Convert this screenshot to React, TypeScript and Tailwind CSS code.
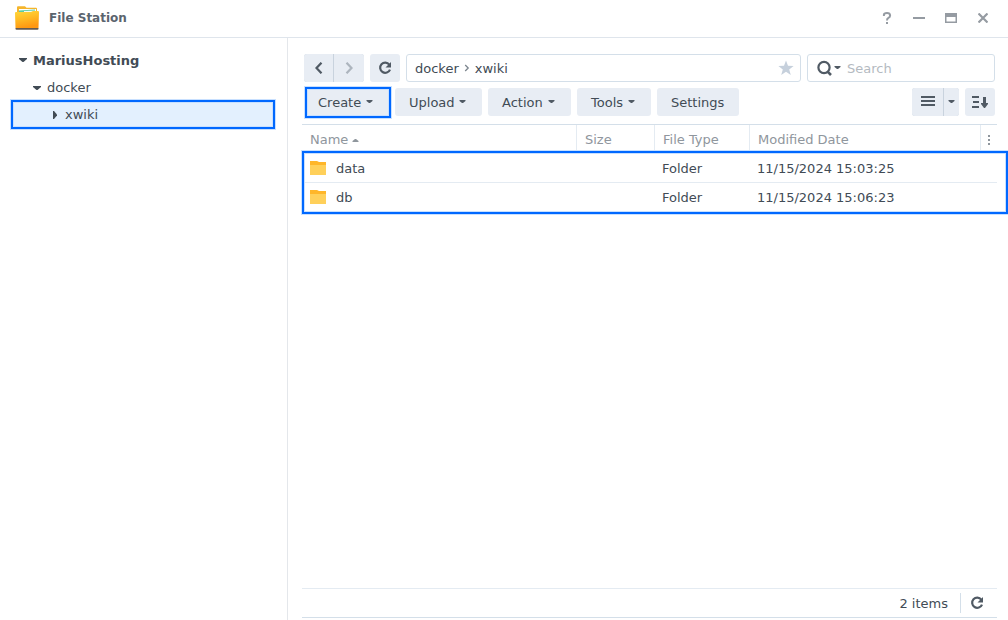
import { useState, type ReactNode } from "react";
import clsx from "clsx";

type FileRow = { name: string; size: string; type: string; modified: string };

const files: FileRow[] = [
  { name: "data", size: "", type: "Folder", modified: "11/15/2024 15:03:25" },
  { name: "db", size: "", type: "Folder", modified: "11/15/2024 15:06:23" },
];

const menus = [
  { label: "Create", width: "w-[85px]", hasMenu: true, marked: true },
  { label: "Upload", width: "w-[87px]", hasMenu: true },
  { label: "Action", width: "w-[83px]", hasMenu: true },
  { label: "Tools", width: "w-[74px]", hasMenu: true },
  { label: "Settings", width: "w-[82px]", hasMenu: false },
];

function Caret({ className }: { className?: string }) {
  return (
    <svg className={clsx("shrink-0", className)} width="7" height="4" viewBox="0 0 7 4" fill="currentColor">
      <path d="M.500 0h6v1L4 3H3L.500 1z" />
    </svg>
  );
}

function TreeArrow({ open }: { open: boolean }) {
  return open ? (
    <svg className="shrink-0" width="10" height="8" viewBox="0 0 10 8" fill="currentColor">
      <path d="M1 2h8v1L5.500 6h-1L1 3z" />
    </svg>
  ) : (
    <svg className="shrink-0" width="10" height="8" viewBox="0 0 10 8" fill="currentColor">
      <path d="M3 0h1l3 3.500v1L4 8H3z" />
    </svg>
  );
}

function ReloadIcon() {
  return (
    <svg width="14" height="14" viewBox="0 0 14 14" fill="none">
      <path d="M11.300 3.600A5.100 5.100 0 1 0 12 8.600" stroke="currentColor" strokeWidth="2.200" />
      <path d="M13 1v5.500H7.500z" fill="currentColor" />
    </svg>
  );
}

function FolderIcon() {
  return (
    <svg className="shrink-0" width="16" height="14" viewBox="0 0 16 14">
      <path d="M0 0h7l2 1h7v6H0z" fill="#ffb629" />
      <path d="M0 4h16v10H0z" fill="#ffd05a" />
    </svg>
  );
}

function AppIcon() {
  return (
    <svg className="shrink-0" width="24" height="24" viewBox="0 0 24 24">
      <defs>
        <linearGradient id="folder-front" x1="0" y1="0" x2="0.300" y2="1">
          <stop offset="0" stopColor="#ffd83c" />
          <stop offset="0.500" stopColor="#ffbc24" />
          <stop offset="1" stopColor="#ff9812" />
        </linearGradient>
      </defs>
      <path d="M2 1.500Q2 .300 3 .300h7l1.500 1.500H21q1 0 1 1V8H2z" fill="#f5b52c" />
      <path d="M4 3h17v5H4z" fill="#fff" />
      <path d="M4 4.500L20 3.500V6H4z" fill="#58cda4" />
      <path d="M9 5l12-.500V8H9z" fill="#eef8f2" />
      <path d="M0 7q0-1 1-1h15l2-1h5q1 0 1 1l-.500 16H.500z" fill="url(#folder-front)" />
      <path d="M.500 22h23v.700q0 1-1 1h-21q-1 0-1-1z" fill="#655a50" />
    </svg>
  );
}

function IconButton({ label, disabled, className, children }: { label: string; disabled?: boolean; className?: string; children: ReactNode }) {
  return (
    <button
      aria-label={label}
      disabled={disabled}
      className={clsx("flex h-7 items-center justify-center bg-[#e8edf4] text-[#505a64] disabled:text-[#adb5be]", className)}
    >
      {children}
    </button>
  );
}

// Blue frame laid over the element being pointed out
function Marker({ className }: { className: string }) {
  return <span className={clsx("pointer-events-none absolute border-2 border-[#0068ff] shadow-[0_0_0_1px_#c8e0ff,inset_0_0_0_1px_#c8e0ff]", className)} />;
}

function TitleBar() {
  return (
    <header className="flex h-[38px] shrink-0 items-center border-b border-[#dfe5ec] pr-[17px] pb-[2px] pl-[15px]">
      <AppIcon />
      <h1 className="ml-[10px] flex-1 text-[12px] leading-[18px] font-bold text-[#5b646e]">File Station</h1>
      <div className="flex gap-[16px] text-[#959ba2]">
        <button aria-label="Help" className="flex size-4 items-center justify-center">
          <svg width="16" height="16" viewBox="0 0 16 16" fill="none">
            <path d="M4.900 6V4.900Q5 3 8 3t3.100 2.400Q11.100 7 9.400 7.900 8 8.600 8 10.500" stroke="currentColor" strokeWidth="2" />
            <path d="M7 12h2v2H7z" fill="currentColor" />
          </svg>
        </button>
        <button aria-label="Minimize" className="flex size-4 items-center justify-center">
          <svg width="12" height="16" viewBox="0 0 12 16" fill="currentColor">
            <path d="M0 7h12v2H0z" />
          </svg>
        </button>
        <button aria-label="Maximize" className="flex size-4 items-center justify-center">
          <svg width="12" height="10" viewBox="0 0 12 10" fill="currentColor" fillRule="evenodd">
            <path d="M0 0h12v10H0zM1.500 4v4.500h9V4z" />
          </svg>
        </button>
        <button aria-label="Close" className="flex size-4 items-center justify-center">
          <svg width="10" height="10" viewBox="0 0 10 10" stroke="currentColor" strokeWidth="2.200">
            <path d="M.500.500l9 9M9.500.500l-9 9" />
          </svg>
        </button>
      </div>
    </header>
  );
}

function Sidebar() {
  return (
    <nav aria-label="Folders" className="w-[288px] shrink-0 border-r border-[#e4e7eb] px-3 pt-2">
      <button className="flex h-7 w-full items-center gap-[5px] pl-[6px] font-bold">
        <TreeArrow open />
        MariusHosting
      </button>
      <button className="flex h-[27px] w-full items-center gap-[5px] pl-[20px]">
        <TreeArrow open />
        docker
      </button>
      <button className="relative flex h-[27px] w-full items-center gap-[5px] rounded-r bg-[#e3f0fe] pl-[38px]">
        <TreeArrow open={false} />
        xwiki
        <Marker className="-inset-y-[1px] right-0 -left-[1px]" />
      </button>
    </nav>
  );
}

function NavigationRow() {
  const [query, setQuery] = useState("");

  return (
    <div className="flex gap-[6px]">
      <div className="flex gap-px rounded-[3px] bg-[#c9d3de]">
        <IconButton label="Back" className="w-[29px] rounded-l-[3px]">
          <svg width="8" height="12" viewBox="0 0 8 12" fill="none" stroke="currentColor" strokeWidth="2.200">
            <path d="M6.500.700L1.500 6l5 5.300" />
          </svg>
        </IconButton>
        <IconButton label="Forward" disabled className="w-[30px] rounded-r-[3px]">
          <svg width="8" height="12" viewBox="0 0 8 12" fill="none" stroke="currentColor" strokeWidth="2.200">
            <path d="M1.500.700l5 5.300-5 5.300" />
          </svg>
        </IconButton>
      </div>
      <IconButton label="Refresh" className="w-[30px] rounded-[3px]">
        <ReloadIcon />
      </IconButton>
      <div className="flex h-7 min-w-0 flex-1 items-center rounded-[3px] border border-[#d4dfe9] pr-[6px] pl-2">
        <a href="#docker">docker</a>
        <svg className="mx-[5px]" width="6" height="8" viewBox="0 0 6 8" fill="none" stroke="#7c858e" strokeWidth="1.300">
          <path d="M1.200 1l3 3-3 3" />
        </svg>
        <a href="#xwiki">xwiki</a>
        <button aria-label="Add to favorites" className="ml-auto">
          <svg width="16" height="16" viewBox="0 0 16 16" fill="#c6d0dc">
            <path d="M8 .500l2 5.300 5.600.200-4.400 3.500 1.600 5.500L8 11.800 3.200 15l1.600-5.500L.400 6l5.600-.200z" />
          </svg>
        </button>
      </div>
      <div className="flex h-7 w-[188px] items-center rounded-[3px] border border-[#d4dfe9] pl-[9px] text-[#505a64]">
        <button aria-label="Search options" className="flex items-center gap-[2px]">
          <svg width="15" height="16" viewBox="0 0 15 16" fill="none" stroke="currentColor">
            <circle cx="7" cy="7.500" r="5.600" strokeWidth="2.200" />
            <path d="M10.300 11.300l3.700 3.700" strokeWidth="2.600" />
          </svg>
          <Caret />
        </button>
        <input
          aria-label="Search"
          placeholder="Search"
          value={query}
          onChange={(e) => setQuery(e.target.value)}
          className="ml-[6px] min-w-0 flex-1 outline-none placeholder:text-[#b4bac1]"
        />
      </div>
    </div>
  );
}

function ActionRow() {
  return (
    <div className="mt-[6px] flex gap-[6px]">
      {menus.map((menu) => (
        <button
          key={menu.label}
          className={clsx("relative flex h-7 items-center justify-between rounded-[3px] bg-[#e8edf4] pr-4 pl-[14px]", menu.width)}
        >
          {menu.label}
          {menu.hasMenu && <Caret className="text-[#505a64]" />}
          {menu.marked && <Marker className="-top-[1px] -right-[2px] -bottom-[2px] left-px" />}
        </button>
      ))}
      <div className="ml-auto flex gap-px rounded-[3px] bg-[#c9d3de]">
        <IconButton label="List view" className="w-[31px] rounded-l-[3px]">
          <svg width="14" height="12" viewBox="0 0 14 12" fill="currentColor">
            <path d="M0 0h14v2H0zM0 4h14v2H0zM0 8h14v2H0z" />
          </svg>
        </IconButton>
        <IconButton label="View options" className="w-[15px] rounded-r-[3px]">
          <Caret />
        </IconButton>
      </div>
      <IconButton label="Sort" className="w-[30px] rounded-[3px]">
        <svg width="16" height="12" viewBox="0 0 16 12" fill="currentColor">
          <path d="M0 0h7v2H0zM1 5h6v2H1zM0 10h7v2H0zM11 1h3v6h2v1l-3 4h-1L9 8V7h2z" />
        </svg>
      </IconButton>
    </div>
  );
}

function FileTable() {
  return (
    <div className="relative mt-2 mr-[11px] ml-[14px] border-t border-[#d4dfe9]">
      <table className="w-full table-fixed border-separate border-spacing-0 text-left">
        <colgroup>
          <col />
          <col className="w-[78px]" />
          <col className="w-[95px]" />
          <col className="w-[231px]" />
          <col className="w-[17px]" />
        </colgroup>
        <thead className="text-[#8f969d]">
          <tr className="h-[29px]">
            <th className="pl-2 font-normal" aria-sort="ascending">
              <button className="flex items-center gap-1">
                Name
                <Caret className="rotate-180" />
              </button>
            </th>
            <th className="border-l border-[#e4ebf2] pl-2 font-normal">Size</th>
            <th className="border-l border-[#e4ebf2] pl-2 font-normal">File Type</th>
            <th className="border-l border-[#e4ebf2] pl-2 font-normal">Modified Date</th>
            <th className="border-l border-[#e4ebf2] pl-[7px]">
              <button aria-label="Columns" className="block">
                <svg width="2" height="10" viewBox="0 0 2 10" fill="currentColor">
                  <path d="M0 0h2v2H0zM0 4h2v2H0zM0 8h2v2H0z" />
                </svg>
              </button>
            </th>
          </tr>
        </thead>
        <tbody>
          {files.map((file) => (
            <tr key={file.name} className="h-[29px]">
              <td className="border-b border-[#e4ebf2] pl-2">
                <span className="flex items-center gap-[10px]">
                  <FolderIcon />
                  {file.name}
                </span>
              </td>
              <td className="border-b border-[#e4ebf2] pl-2">{file.size}</td>
              <td className="border-b border-[#e4ebf2] pl-2">{file.type}</td>
              <td className="border-b border-[#e4ebf2] pl-2">{file.modified}</td>
              <td className="border-b border-[#e4ebf2]" />
            </tr>
          ))}
        </tbody>
      </table>
      <Marker className="top-[26px] -right-[11px] -bottom-[2px] left-0" />
    </div>
  );
}

function StatusBar() {
  return (
    <footer className="mt-auto mr-[11px] mb-[2px] ml-[14px] flex h-[30px] items-center justify-end border-t border-b border-t-[#e4ebf2] border-b-[#d4dfe9] pr-[13px]">
      <span>{files.length} items</span>
      <span className="mr-[9px] ml-3 h-5 w-px bg-[#d4dfe9]" />
      <button aria-label="Reload list" className="text-[#505a64]">
        <ReloadIcon />
      </button>
    </footer>
  );
}

export default function App() {
  return (
    <div className="flex min-h-screen flex-col overflow-hidden bg-white font-['DejaVu_Sans',sans-serif] text-[13px] leading-[19px] text-[#414b55]">
      <TitleBar />
      <div className="flex flex-1">
        <Sidebar />
        <main className="flex min-w-0 flex-1 flex-col pt-4">
          <div className="pr-[13px] pl-4">
            <NavigationRow />
            <ActionRow />
          </div>
          <FileTable />
          <StatusBar />
        </main>
      </div>
    </div>
  );
}
